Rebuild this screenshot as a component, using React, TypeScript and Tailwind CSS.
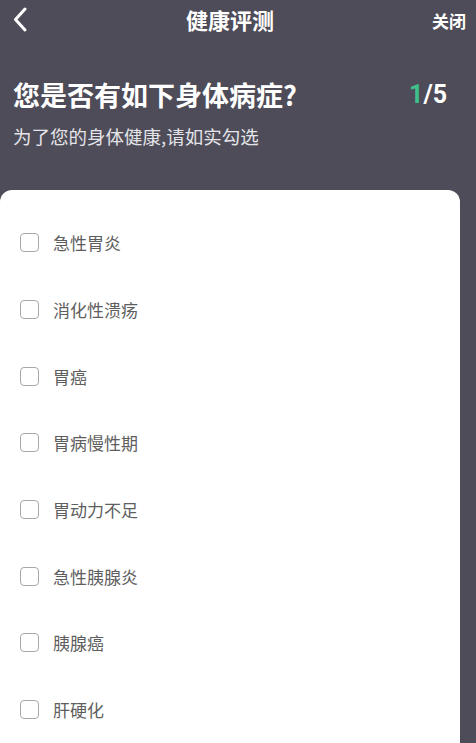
import React from "react";

const items = [
  "急性胃炎",
  "消化性溃疡",
  "胃癌",
  "胃病慢性期",
  "胃动力不足",
  "急性胰腺炎",
  "胰腺癌",
  "肝硬化",
];

export default function App() {
  return (
    <div
      className="h-[743px] w-full overflow-hidden bg-[#4e4c58]"
      style={{ fontFamily: '"Noto Sans CJK SC", "Noto Sans", sans-serif' }}
    >
      <div className="flex h-[38px] items-center">
        <div className="flex w-[52px] items-center pl-[13px]">
          <svg width="14" height="25" viewBox="0 0 14 25" fill="none">
            <path
              d="M12 2 L2.5 12.5 L12 23"
              stroke="#ffffff"
              strokeWidth="3"
              strokeLinecap="round"
              strokeLinejoin="round"
            />
          </svg>
        </div>
        <div className="flex-1 text-center text-[22px] font-bold leading-none text-white">
          健康评测
        </div>
        <div className="w-[68px] pr-[10px] pt-[3px] text-right text-[17px] font-bold leading-none text-white">
          关闭
        </div>
      </div>

      <div className="mt-[39px] flex h-[36px] items-center justify-between pl-[13px] pr-[29px]">
        <div className="text-[27px] font-bold leading-[36px] text-white">
          您是否有如下身体病症?
        </div>
        <div
          className="text-[25px] font-bold leading-[36px] text-white"
          style={{ fontFamily: 'Roboto, "Noto Sans", sans-serif' }}
        >
          <span className="text-[#3fbf8c]">1</span>/5
        </div>
      </div>

      <div className="mt-[11px] pl-[13px] text-[18.5px] leading-[24px] text-[#e4e4e8]">
        为了您的身体健康,请如实勾选
      </div>

      <div className="mt-[42px] w-[460px] rounded-tl-[12px] rounded-tr-[12px] bg-white pb-[20px] pl-[20px] pt-[19.5px]">
        {items.map((t) => (
          <div key={t} className="flex h-[66.7px] items-center">
            <div className="h-[19px] w-[19px] rounded-[4px] border-[1.5px] border-[#a8a8a8]" />
            <div className="ml-[14px] text-[17px] leading-none text-[#5e5e5e]">{t}</div>
          </div>
        ))}
      </div>
    </div>
  );
}
